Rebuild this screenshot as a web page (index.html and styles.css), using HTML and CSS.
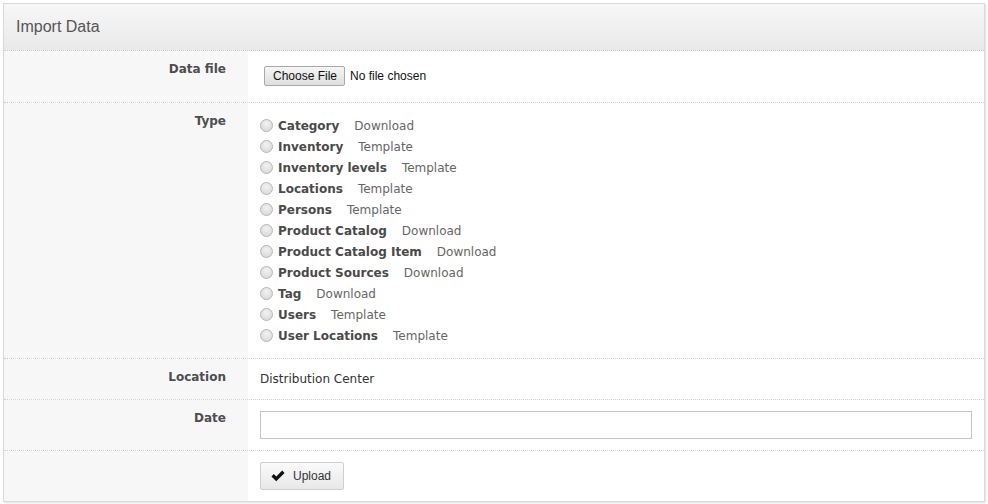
FILE: index.html
```html
<!DOCTYPE html>
<html>
<head>
<meta charset="utf-8">
<link rel="stylesheet" href="styles.css">
</head>
<body>
<div class="panel">
  <div class="panel-head">Import Data</div>
  <div class="row">
    <div class="label">Data file</div>
    <div class="field field-file">
      <span class="file-btn">Choose File</span><span class="file-name">No file chosen</span>
    </div>
  </div>
  <div class="row">
    <div class="label">Type</div>
    <div class="field">
      <ul class="types">
        <li><input type="radio" name="t" class="radio"><b>Category</b><a class="tlink">Download</a></li>
        <li><input type="radio" name="t" class="radio"><b>Inventory</b><a class="tlink">Template</a></li>
        <li><input type="radio" name="t" class="radio"><b>Inventory levels</b><a class="tlink">Template</a></li>
        <li><input type="radio" name="t" class="radio"><b>Locations</b><a class="tlink">Template</a></li>
        <li><input type="radio" name="t" class="radio"><b>Persons</b><a class="tlink">Template</a></li>
        <li><input type="radio" name="t" class="radio"><b>Product Catalog</b><a class="tlink">Download</a></li>
        <li><input type="radio" name="t" class="radio"><b>Product Catalog Item</b><a class="tlink">Download</a></li>
        <li><input type="radio" name="t" class="radio"><b>Product Sources</b><a class="tlink">Download</a></li>
        <li><input type="radio" name="t" class="radio"><b>Tag</b><a class="tlink">Download</a></li>
        <li><input type="radio" name="t" class="radio"><b>Users</b><a class="tlink">Template</a></li>
        <li><input type="radio" name="t" class="radio"><b>User Locations</b><a class="tlink">Template</a></li>
      </ul>
    </div>
  </div>
  <div class="row">
    <div class="label">Location</div>
    <div class="field field-text">Distribution Center</div>
  </div>
  <div class="row">
    <div class="label">Date</div>
    <div class="field"><input type="text" class="date-input"></div>
  </div>
  <div class="row">
    <div class="label"></div>
    <div class="field">
      <button class="btn"><svg class="check" viewBox="0 0 16 13" width="14" height="12"><path d="M0.5 7 L3.2 4.3 L6 7.1 L12.8 0.3 L15.5 3 L6 12.5 Z" fill="#111"/></svg>Upload</button>
    </div>
  </div>
</div>
</body>
</html>
```

FILE: styles.css
```css
html, body {
  margin: 0;
  padding: 0;
  background: #fff;
}
body {
  padding: 3px;
  font-family: "DejaVu Sans", Verdana, sans-serif;
  font-size: 12px;
  color: #333;
}
.panel {
  border: 1px solid #d9d9d9;
  box-shadow: 1px 1px 2px rgba(0, 0, 0, 0.12);
  background: #fff;
}
.panel-head {
  height: 46px;
  display: flex;
  align-items: center;
  padding-left: 12px;
  font-family: "Liberation Sans", Arial, sans-serif;
  font-size: 16px;
  color: #555;
  background: linear-gradient(#f7f7f7, #e9e9e9);
  border-bottom: 1px dotted #c8c8c8;
}
.row {
  display: flex;
  border-top: 1px dotted #cfcfcf;
}
.panel-head + .row {
  border-top: none;
}
.label {
  width: 222px;
  flex: none;
  background: #f7f7f7;
  padding: 11px 22px 0 0;
  text-align: right;
  font-weight: bold;
  color: #4d4d4d;
  line-height: 14px;
}
.field {
  flex: 1;
  padding: 11px 12px 11px 12px;
}
.field-file {
  display: flex;
  align-items: center;
  min-height: 28px;
  padding-top: 11px;
  padding-bottom: 12px;
}
.file-btn {
  display: inline-block;
  margin-left: 4px;
  height: 18px;
  line-height: 18px;
  padding: 0 7px 0 8px;
  border: 1px solid #a9a9a9;
  border-radius: 2px;
  background: linear-gradient(#f6f6f6, #dedede);
  font-family: "Liberation Sans", Arial, sans-serif;
  font-size: 12px;
  color: #111;
}
.file-name {
  margin-left: 5px;
  font-family: "Liberation Sans", Arial, sans-serif;
  font-size: 12px;
  color: #111;
}
.types {
  list-style: none;
  margin: 0;
  padding: 1px 0 1px 0;
}
.types li {
  display: flex;
  align-items: center;
  height: 21px;
}
.types b {
  color: #4a4a4a;
}
.radio {
  appearance: none;
  -webkit-appearance: none;
  width: 13px;
  height: 13px;
  margin: 0 5px 0 0;
  border: 1px solid #b5b5b5;
  border-radius: 50%;
  background: radial-gradient(circle at 50% 35%, #f2f2f2, #d4d4d4);
  box-sizing: border-box;
}
.tlink {
  margin-left: 15px;
  color: #666;
}
.field-text {
  line-height: 18px;
  color: #333;
}
.date-input {
  display: block;
  width: 100%;
  height: 28px;
  box-sizing: border-box;
  border: 1px solid #c4c4c4;
  margin: 0;
  padding: 4px 6px;
  font-family: inherit;
  font-size: 12px;
}
.btn {
  display: flex;
  align-items: center;
  height: 28px;
  width: 84px;
  padding: 0 0 0 10px;
  border: 1px solid #cfcfcf;
  border-radius: 2px;
  background: linear-gradient(#fafafa, #e8e8e8);
  font-family: "Liberation Sans", Arial, sans-serif;
  font-size: 12px;
  color: #333;
}
.check {
  margin-right: 8px;
}
```
